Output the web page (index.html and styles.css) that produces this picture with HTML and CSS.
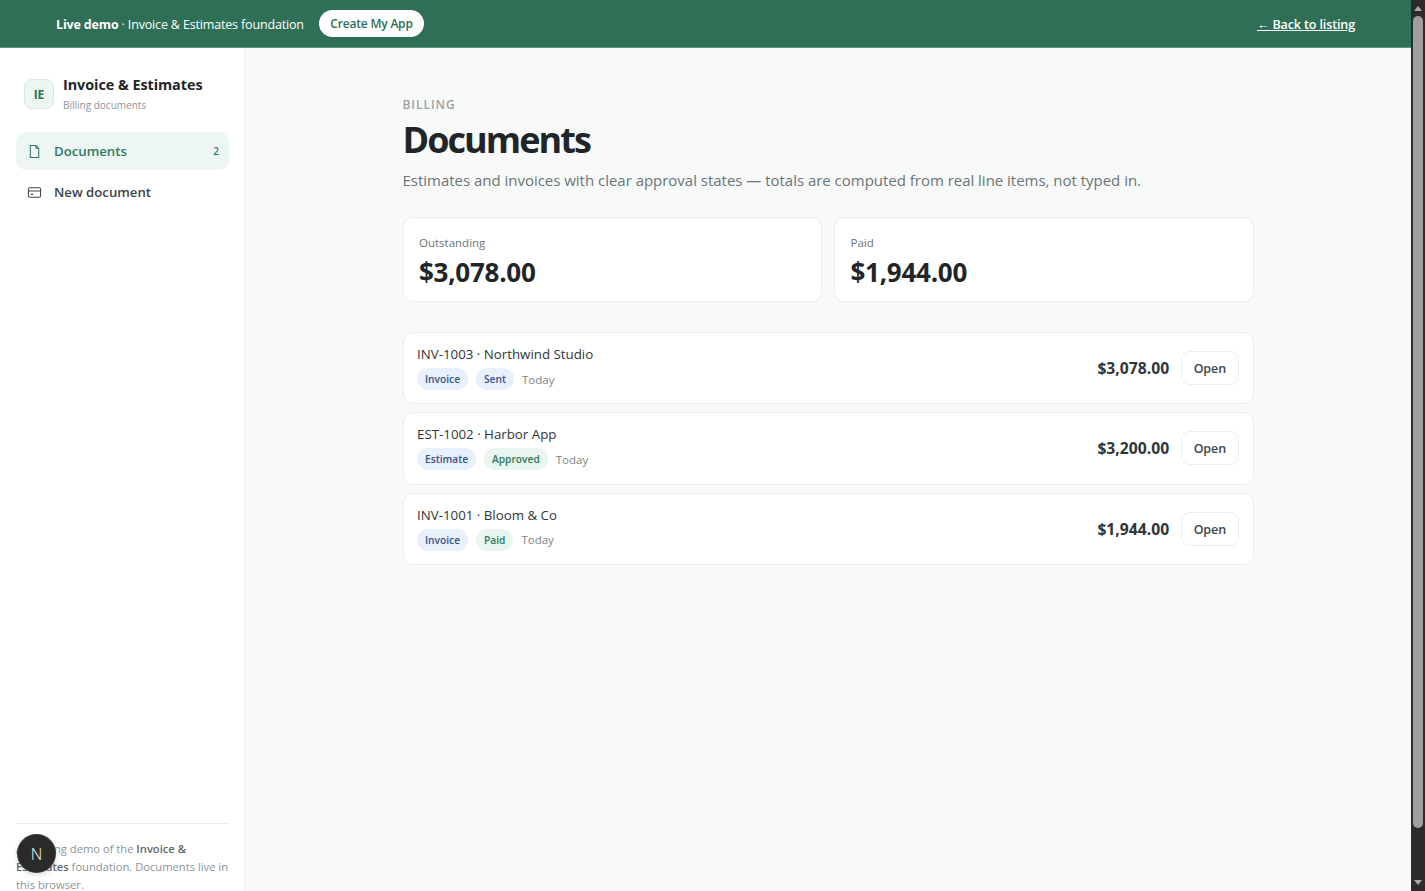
FILE: index.html
```html
<!DOCTYPE html>
<html lang="en">
<head>
  <meta charset="UTF-8">
  <meta name="viewport" content="width=device-width, initial-scale=1.0">
  <title>Invoice &amp; Estimates</title>
  <link rel="stylesheet" href="styles.css">
</head>
<body>
  <div class="window">
    <div class="page">
      <div class="demo-bar">
        <div class="demo-left">
          <span class="demo-text"><b>Live demo</b> · Invoice &amp; Estimates foundation</span>
          <a class="demo-btn" href="#">Create My App</a>
        </div>
        <a class="demo-back" href="#">← Back to listing</a>
      </div>

      <div class="layout">
        <aside class="sidebar">
          <div class="brand">
            <div class="brand-mark">IE</div>
            <div>
              <div class="brand-name">Invoice &amp; Estimates</div>
              <div class="brand-sub">Billing documents</div>
            </div>
          </div>
          <nav class="nav">
            <a class="nav-item active" href="#">
              <svg class="nav-icon" viewBox="0 0 16 16"><path d="M3.5 1.5h6l3 3v10h-9z M9.5 1.5v3h3"/></svg>
              <span>Documents</span>
              <span class="nav-count">2</span>
            </a>
            <a class="nav-item" href="#">
              <svg class="nav-icon" viewBox="0 0 16 16"><rect x="1.5" y="3" width="13" height="10" rx="1.5"/><path d="M1.5 6.5h13 M4 10h2.5"/></svg>
              <span>New document</span>
            </a>
          </nav>
          <div class="side-foot">
            A running demo of the <b>Invoice &amp; Estimates</b> foundation. Documents live in this browser.
          </div>
        </aside>

        <main class="main">
          <div class="content">
            <div class="eyebrow">BILLING</div>
            <h1>Documents</h1>
            <p class="lead">Estimates and invoices with clear approval states — totals are computed from real line items, not typed in.</p>

            <div class="stats">
              <div class="stat">
                <div class="stat-label">Outstanding</div>
                <div class="stat-value">$3,078.00</div>
              </div>
              <div class="stat">
                <div class="stat-label">Paid</div>
                <div class="stat-value">$1,944.00</div>
              </div>
            </div>

            <div class="doc-list">
              <div class="doc">
                <div class="doc-info">
                  <div class="doc-title">INV-1003 · Northwind Studio</div>
                  <div class="doc-meta">
                    <span class="pill blue">Invoice</span>
                    <span class="pill blue">Sent</span>
                    <span class="doc-date">Today</span>
                  </div>
                </div>
                <div class="doc-right">
                  <span class="doc-total">$3,078.00</span>
                  <a class="open-btn" href="#">Open</a>
                </div>
              </div>
              <div class="doc">
                <div class="doc-info">
                  <div class="doc-title">EST-1002 · Harbor App</div>
                  <div class="doc-meta">
                    <span class="pill blue">Estimate</span>
                    <span class="pill green">Approved</span>
                    <span class="doc-date">Today</span>
                  </div>
                </div>
                <div class="doc-right">
                  <span class="doc-total">$3,200.00</span>
                  <a class="open-btn" href="#">Open</a>
                </div>
              </div>
              <div class="doc">
                <div class="doc-info">
                  <div class="doc-title">INV-1001 · Bloom &amp; Co</div>
                  <div class="doc-meta">
                    <span class="pill blue">Invoice</span>
                    <span class="pill green">Paid</span>
                    <span class="doc-date">Today</span>
                  </div>
                </div>
                <div class="doc-right">
                  <span class="doc-total">$1,944.00</span>
                  <a class="open-btn" href="#">Open</a>
                </div>
              </div>
            </div>
          </div>
        </main>
      </div>
    </div>

    <div class="scrollbar">
      <span class="arrow up"></span>
      <span class="thumb"></span>
      <span class="arrow down"></span>
    </div>

    <div class="next-badge">N</div>
  </div>
</body>
</html>
```

FILE: styles.css
```css
* {
  margin: 0;
  padding: 0;
  box-sizing: border-box;
}

html, body {
  height: 100%;
  overflow: hidden;
}

body {
  font-family: "Open Sans", "Noto Sans", Arial, sans-serif;
  color: #1f2528;
  background: #f8faf9;
}

a {
  color: inherit;
  text-decoration: none;
}

.window {
  display: flex;
  height: 891px;
  overflow: hidden;
  position: relative;
}

.page {
  flex: 1;
  min-width: 0;
  display: flex;
  flex-direction: column;
}

/* demo banner */
.demo-bar {
  height: 48px;
  flex-shrink: 0;
  display: flex;
  align-items: center;
  justify-content: space-between;
  padding: 0 56px;
  background: #2e6f56;
  border-bottom: 1px solid #5e9580;
  color: #fff;
  font-size: 12.5px;
  letter-spacing: -0.16px;
}

.demo-left {
  display: flex;
  align-items: center;
  gap: 15px;
}

.demo-text {
  padding-top: 1px;
}

.demo-text b {
  font-weight: 700;
}

.demo-btn {
  display: block;
  height: 27px;
  line-height: 28px;
  padding: 0 11.5px;
  border-radius: 14px;
  background: #fff;
  color: #2e6f56;
  font-size: 12px;
  font-weight: 600;
  letter-spacing: -0.2px;
}

.demo-back {
  padding-top: 1px;
  font-size: 12.6px;
  font-weight: 600;
  text-decoration: underline;
}

.layout {
  flex: 1;
  display: flex;
  height: 846px;
  min-height: 846px;
}

/* sidebar */
.sidebar {
  width: 245px;
  flex-shrink: 0;
  display: flex;
  flex-direction: column;
  padding: 27px 15px 0 16px;
  background: #fff;
  border-right: 1px solid #edf0ef;
}

.brand {
  display: flex;
  align-items: flex-start;
  gap: 9px;
  padding: 0 8px;
  margin-bottom: 17px;
}

.brand-mark {
  width: 30px;
  height: 30px;
  margin-top: 4px;
  display: flex;
  align-items: center;
  justify-content: center;
  border: 1px solid #d9e8e1;
  border-radius: 8px;
  background: #eef6f2;
  color: #2e6f56;
  font-size: 12px;
  font-weight: 700;
}

.brand-name {
  font-size: 14.4px;
  line-height: 20px;
  font-weight: 700;
  letter-spacing: -0.05px;
}

.brand-sub {
  font-size: 10px;
  line-height: 20px;
  color: #8b9499;
}

.nav {
  display: flex;
  flex-direction: column;
  gap: 3px;
}

.nav-item {
  display: flex;
  align-items: center;
  height: 38px;
  padding: 0 10px 0 11px;
  border-radius: 10px;
  font-size: 13.2px;
  font-weight: 600;
  color: #3c4449;
}

.nav-item.active {
  background: #edf6f2;
  color: #2f7a5f;
}

.nav-icon {
  width: 15px;
  height: 15px;
  margin-right: 12px;
  fill: none;
  stroke: currentColor;
  stroke-width: 1.1;
}

.nav-count {
  margin-left: auto;
  font-size: 10px;
  font-weight: 600;
}

.side-foot {
  margin-top: auto;
  padding-top: 16px;
  border-top: 1px solid #e8ecea;
  font-size: 11.2px;
  line-height: 18px;
  color: #8b9499;
}

.side-foot b {
  color: #5f686d;
  font-weight: 600;
}

/* main column */
.main {
  flex: 1;
  min-width: 0;
}

.content {
  width: 851px;
  margin: 0 auto;
  padding-top: 48px;
}

.eyebrow {
  font-size: 12px;
  line-height: 18px;
  font-weight: 600;
  letter-spacing: 0.08em;
  color: #99a2a6;
}

h1 {
  font-size: 36px;
  line-height: 52px;
  font-weight: 700;
  letter-spacing: -1.95px;
}

.lead {
  margin-top: 2px;
  font-size: 15px;
  line-height: 24px;
  letter-spacing: -0.02px;
  color: #6b7478;
}

.stats {
  display: grid;
  grid-template-columns: 1fr 1fr;
  gap: 12px;
  margin-top: 25px;
}

.stat {
  height: 85px;
  padding: 17px 15.5px 0;
  background: #fff;
  border: 1px solid #ebeeed;
  border-radius: 10px;
}

.stat-label {
  font-size: 11.5px;
  line-height: 16px;
  color: #6b7478;
}

.stat-value {
  font-size: 26px;
  line-height: 42px;
  font-weight: 700;
  letter-spacing: -0.01em;
}

.doc-list {
  display: flex;
  flex-direction: column;
  gap: 8px;
  margin-top: 30px;
}

.doc {
  height: 72.25px;
  display: flex;
  align-items: center;
  justify-content: space-between;
  padding: 0 14px 0 13.5px;
  background: #fff;
  border: 1px solid #ebeeed;
  border-radius: 10px;
}

.doc-info {
  padding-bottom: 2px;
}

.doc-title {
  font-size: 13.3px;
  line-height: 20px;
  color: #2f3538;
}

.doc-meta {
  display: flex;
  align-items: center;
  gap: 8px;
  margin-top: 4px;
}

.pill {
  height: 22px;
  line-height: 22px;
  padding: 0 8px;
  border-radius: 11px;
  font-size: 10.2px;
  font-weight: 600;
}

.pill.blue {
  background: #e8f0fb;
  color: #34558f;
}

.pill.green {
  background: #e9f5ef;
  color: #2e7a5c;
}

.doc-date {
  font-size: 11.5px;
  color: #7b8488;
}

.doc-right {
  display: flex;
  align-items: center;
  gap: 12px;
}

.doc-total {
  font-size: 15.7px;
  font-weight: 700;
  color: #2f3538;
}

.open-btn {
  display: block;
  height: 34px;
  line-height: 34px;
  padding: 0 11.5px;
  background: #fff;
  border: 1px solid #ebeeed;
  border-radius: 9px;
  font-size: 12.5px;
  font-weight: 600;
  letter-spacing: -0.1px;
  color: #3c4449;
}

/* browser scrollbar as captured */
.scrollbar {
  width: 14px;
  flex-shrink: 0;
  display: flex;
  flex-direction: column;
  align-items: center;
  background: #2b2b2b;
}

.arrow {
  width: 0;
  height: 0;
  flex-shrink: 0;
  border-left: 4.5px solid transparent;
  border-right: 4.5px solid transparent;
}

.arrow.up {
  margin: 6px 0 5px;
  border-bottom: 5px solid #a8a8a8;
}

.arrow.down {
  margin-top: auto;
  margin-bottom: 6px;
  border-top: 5px solid #a8a8a8;
}

.thumb {
  width: 10px;
  height: 812px;
  border-radius: 5px;
  background: #9f9f9f;
}

/* dev tools badge */
.next-badge {
  position: absolute;
  left: 18px;
  top: 835px;
  width: 37px;
  height: 37px;
  display: flex;
  align-items: center;
  justify-content: center;
  border-radius: 50%;
  background: #2a2a2a;
  box-shadow: 0 0 0 1px #3a3a3a, 0 2px 6px rgba(0, 0, 0, 0.2);
  color: #fff;
  font-size: 16px;
  font-weight: 300;
}
```
